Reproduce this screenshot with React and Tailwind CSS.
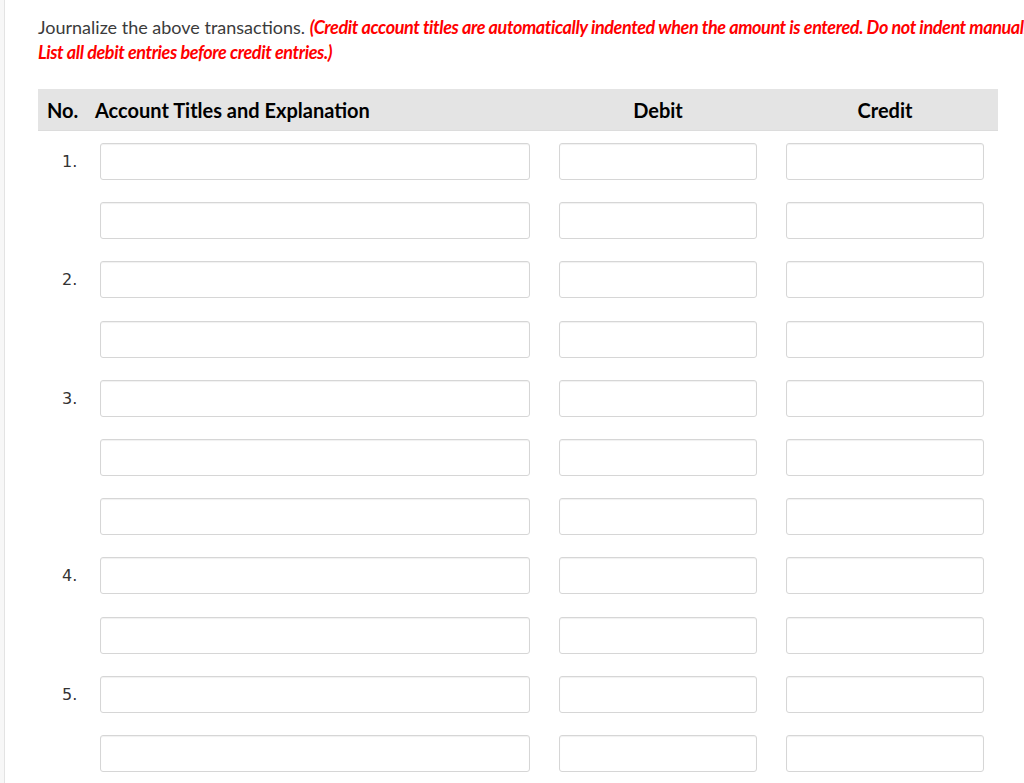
const rows = ["1.", "", "2.", "", "3.", "", "", "4.", "", "5.", ""];

const Box = ({ w }) => (
  <div
    className={`${w} h-[37px] shrink-0 rounded-[3px] border border-[#d6d6d6] bg-white shadow-[inset_0_1px_1px_rgba(0,0,0,0.06)]`}
  ></div>
);

const App = () => {
  return (
    <div className="min-h-screen w-[1024px] overflow-hidden bg-[#f7f7f7] pl-[4px]">
      <div className="min-h-screen bg-white border-l border-[#e3e3e3] pl-[33px] pt-[15px] font-['Lato',sans-serif]">
        <p className="text-[18px] leading-[25px] text-[#3b3b3b] whitespace-nowrap">
          Journalize the above transactions.{" "}
          <span className="italic font-bold text-[#ff0000] tracking-[-0.4px]">
            (Credit account titles are automatically indented when the amount is
            entered. Do not indent manually.
            <br />
            List all debit entries before credit entries.)
          </span>
        </p>

        <div className="mt-[24px] w-[960px]">
          <div className="flex h-[41px] items-center bg-[#e4e4e4] text-[20px] font-bold text-black">
            <div className="w-[57px] pl-[9px]">No.</div>
            <div className="w-[464px]">Account Titles and Explanation</div>
            <div className="w-[198px] text-center">Debit</div>
            <div className="w-[29px]"></div>
            <div className="w-[198px] text-center">Credit</div>
          </div>
          <div className="h-px bg-[#dcdcdc]"></div>

          {rows.map((n, i) => (
            <div key={i} className="flex h-[59.2px] pt-[12px]">
              <div className="w-[62px] shrink-0 pl-[24px] pt-[9px] font-['DejaVu_Sans',sans-serif] text-[16px] leading-[20px] text-[#333]">
                {n}
              </div>
              <Box w="w-[430px]" />
              <div className="w-[29px] shrink-0"></div>
              <Box w="w-[198px]" />
              <div className="w-[29px] shrink-0"></div>
              <Box w="w-[198px]" />
            </div>
          ))}
        </div>
      </div>
    </div>
  );
};

export default App;
